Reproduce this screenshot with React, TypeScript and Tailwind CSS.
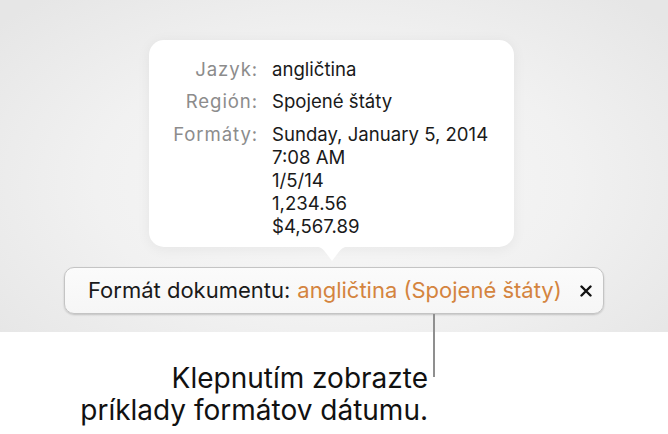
import React from 'react';

const rows = [
  { label: 'Jazyk:', values: ['angličtina'] },
  { label: 'Región:', values: ['Spojené štáty'] },
  { label: 'Formáty:', values: ['Sunday, January 5, 2014', '7:08 AM', '1/5/14', '1,234.56', '$4,567.89'] },
];

const App: React.FC = () => {
  return (
    <div className="relative w-[668px] h-[434px] bg-white overflow-hidden font-['Inter',sans-serif]">
      {/* Gray canvas behind the popover */}
      <div className="h-[332px] pt-[40px] bg-[radial-gradient(ellipse_65%_75%_at_50%_55%,#f8f8f8_0%,#f1f1f1_55%,#e6e6e6_100%)]">
        {/* Popover */}
        <div className="relative ml-[149px] w-[365px] h-[207px] bg-white rounded-[15px] shadow-[0_2px_14px_rgba(0,0,0,0.06)] pt-[18px]">
          <div className="flex flex-col gap-[9px]">
            {rows.map((row, i) => (
              <div key={row.label} className={`flex text-[18.6px] leading-[23px] ${i === 2 ? 'mt-[1px]' : ''}`}>
                <div className="w-[109px] text-right text-[#8c8c8c] tracking-[0.9px]">{row.label}</div>
                <div className="pl-[14px] text-[#1a1a1a] flex flex-col">
                  {row.values.map(v => (
                    <span key={v}>{v}</span>
                  ))}
                </div>
              </div>
            ))}
          </div>
          {/* Arrow */}
          <svg className="absolute left-[163px] top-[206px]" width="40" height="22" viewBox="0 0 40 22">
            <path d="M0 0 C8 0 10 2 14 7 L20 15 L26 7 C30 2 32 0 40 0 Z" fill="#ffffff" />
          </svg>
        </div>

        {/* Document format bar */}
        <div className="relative mt-[20px] ml-[64px] w-[540px] h-[47px] rounded-[10px] border border-[#c4c4c4] bg-[linear-gradient(#fbfbfb,#f6f6f6)] shadow-[0_1px_2px_rgba(0,0,0,0.18)] flex items-center pl-[23px] whitespace-nowrap">
          <span className="text-[22px] text-[#1a1a1a]">Formát dokumentu:</span>
          <span className="ml-[7px] text-[22px] text-[#d4843e]">angličtina (Spojené štáty)</span>
          <svg className="ml-[18px] shrink-0" width="12" height="12" viewBox="0 0 12 12">
            <path d="M1.5 1.5 L10.5 10.5 M10.5 1.5 L1.5 10.5" stroke="#111" strokeWidth="2.4" strokeLinecap="round" />
          </svg>
        </div>
      </div>

      {/* Leader line */}
      <div className="absolute left-[433px] top-[314px] w-[2px] h-[63px] bg-[#8f8f8f]" />

      {/* Callout */}
      <div className="w-[428px] pt-[30px] text-right text-[28px] leading-[32px] text-[#111]">
        <div>Klepnutím zobrazte</div>
        <div>príklady formátov dátumu.</div>
      </div>
    </div>
  );
};

export default App;
